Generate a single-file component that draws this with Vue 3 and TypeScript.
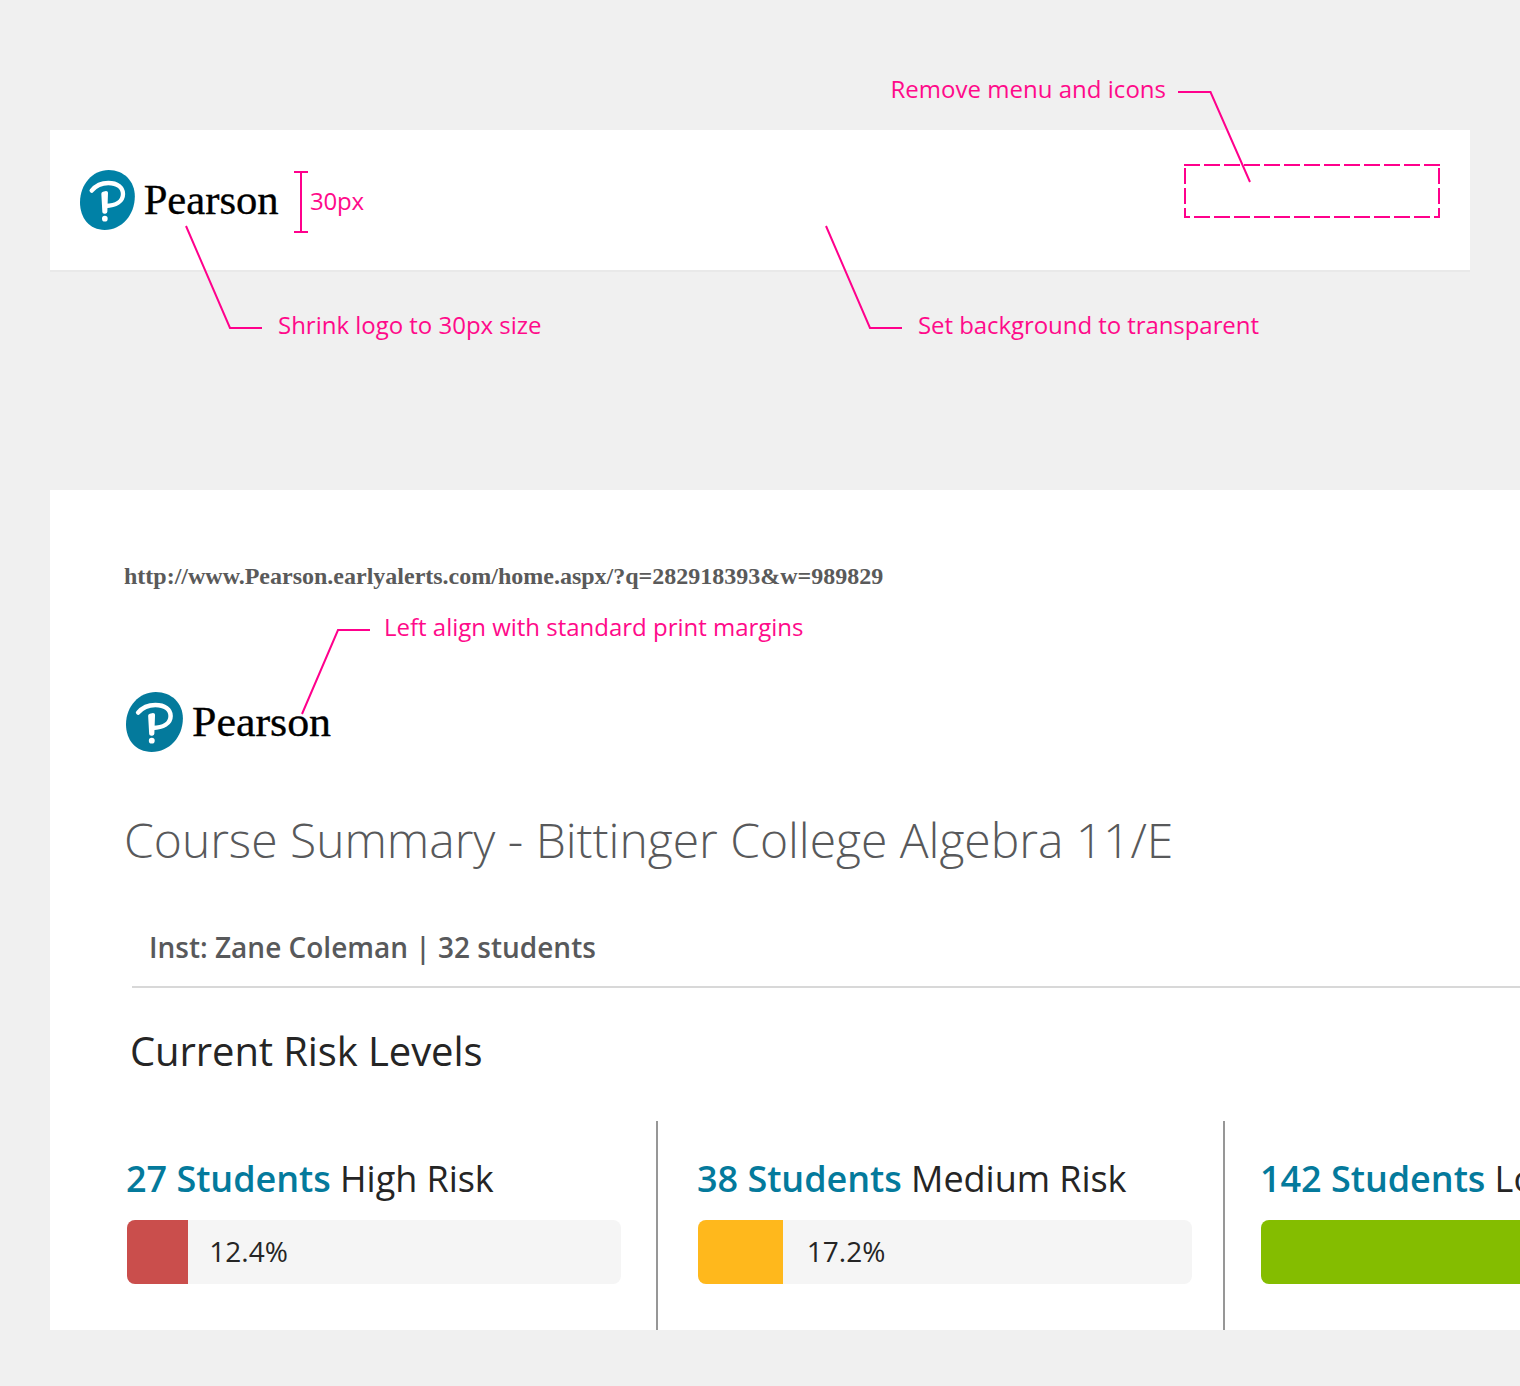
<script setup lang="ts">
interface Note {
  text: string
  x: number
  y: number
  width: number
  line: string
}

interface Risk {
  count: string
  level: string
  percent: string
  fill: number
  gap: number
  color: string
}

interface Logo {
  width: number
  color: string
}

const logos: Record<string, Logo> = {
  header: { width: 200, color: '#0081a6' },
  print: { width: 207.5, color: '#047a9c' },
}

const notes: Note[] = [
  { text: 'Remove menu and icons', x: 890.5, y: 98, width: 275.5, line: '1178,92 1210.5,92 1250,182' },
  { text: 'Shrink logo to 30px size', x: 278, y: 334, width: 263.5, line: '186,226 230,328 262,328' },
  { text: 'Set background to transparent', x: 918, y: 334, width: 341, line: '826,226 870,328 902,328' },
  { text: 'Left align with standard print margins', x: 384, y: 636, width: 419.5, line: '302,714 338,630 370,630' },
]

const risks: Risk[] = [
  { count: '27 Students', level: 'High Risk', percent: '12.4%', fill: 61.3, gap: 21, color: '#ca4e4c' },
  { count: '38 Students', level: 'Medium Risk', percent: '17.2%', fill: 85.3, gap: 23.5, color: '#ffb81c' },
  { count: '142 Students', level: 'Low Risk', percent: '', fill: 494, gap: 0, color: '#84bd00' },
]
</script>

<template>
  <div class="board">
    <header class="bar">
      <svg class="logo" :width="logos.header.width" height="60" viewBox="0 0 600 180" preserveAspectRatio="none">
        <path d="M86 0C132 0 164.500 34 164.500 79C164.500 135 126 180 74 180C28 180 0 144 0 97C0 43 38 0 86 0Z" :fill="logos.header.color" />
        <path d="M35 62C48 46 66 39 85 39C112 39 129 52 129 72C129 95 107 107 77 108" fill="none" stroke="#fff" stroke-width="13" stroke-linecap="round" />
        <path d="M64 71Q64 66 69 65L78 63Q84 63 84 68L82 125Q82 130 76 131Q67 132 67 126Z" fill="#fff" />
        <circle cx="74.500" cy="146" r="8.500" fill="#fff" />
        <text class="word" x="191" y="131" textLength="405" lengthAdjust="spacingAndGlyphs">Pearson</text>
      </svg>
    </header>

    <main class="sheet">
      <p class="url">http://www.Pearson.earlyalerts.com/home.aspx/?q=282918393&amp;w=989829</p>
      <svg class="logo" :width="logos.print.width" height="60" viewBox="0 0 600 180" preserveAspectRatio="none">
        <path d="M86 0C132 0 164.500 34 164.500 79C164.500 135 126 180 74 180C28 180 0 144 0 97C0 43 38 0 86 0Z" :fill="logos.print.color" />
        <path d="M35 62C48 46 66 39 85 39C112 39 129 52 129 72C129 95 107 107 77 108" fill="none" stroke="#fff" stroke-width="13" stroke-linecap="round" />
        <path d="M64 71Q64 66 69 65L78 63Q84 63 84 68L82 125Q82 130 76 131Q67 132 67 126Z" fill="#fff" />
        <circle cx="74.500" cy="146" r="8.500" fill="#fff" />
        <text class="word" x="191" y="131" textLength="402" lengthAdjust="spacingAndGlyphs">Pearson</text>
      </svg>
      <h1 class="title">Course Summary - Bittinger College Algebra 11/E</h1>
      <p class="inst">Inst: Zane Coleman | 32 students</p>
      <h2 class="section">Current Risk Levels</h2>
      <div class="risks">
        <section v-for="risk in risks" :key="risk.level" class="risk">
          <h3 class="label"><b>{{ risk.count }}</b> {{ risk.level }}</h3>
          <div class="track">
            <div class="fill" :style="{ width: risk.fill + 'px', background: risk.color }"></div>
            <span class="percent" :style="{ marginLeft: risk.gap + 'px' }">{{ risk.percent }}</span>
          </div>
        </section>
      </div>
    </main>

    <svg class="notes" width="1520" height="1386" viewBox="0 0 1520 1386">
      <g v-for="note in notes" :key="note.text">
        <polyline :points="note.line" />
        <text :x="note.x" :y="note.y" :textLength="note.width">{{ note.text }}</text>
      </g>
      <path d="M294 172H308M301 172V232M294 232H308" />
      <text x="310" y="210" textLength="54">30px</text>
      <path d="M1184 165H1440" stroke-dasharray="16 4" />
      <path d="M1185 168V218M1439 168V218" stroke-dasharray="16 4" />
      <path d="M1184 217H1440" stroke-dasharray="16 4" stroke-dashoffset="10" />
    </svg>
  </div>
</template>

<style>
body {
  margin: 0;
  overflow: hidden;
}
</style>

<style scoped>
.board {
  position: relative;
  box-sizing: border-box;
  width: 1520px;
  height: 1386px;
  padding: 130px 0 0 50px;
  overflow: hidden;
  background: #f0f0f0;
  font-family: "Open Sans", sans-serif;
}

.bar {
  box-sizing: border-box;
  width: 1420px;
  height: 142px;
  padding: 40px 30px 0;
  border-bottom: 2px solid #e9e9e9;
  background: #fff;
}

.logo {
  display: block;
  overflow: visible;
}

.word {
  font-family: "Liberation Serif", serif;
  font-size: 125px;
  fill: #000;
  stroke: #000;
  stroke-width: 1px;
}

.sheet {
  box-sizing: border-box;
  height: 840px;
  margin-top: 218px;
  padding-top: 70px;
  overflow: hidden;
  background: #fff;
}

.url {
  margin: 0 0 0 74px;
  font: bold 24px/32px "Liberation Serif", serif;
  color: #5a5a5a;
  white-space: nowrap;
}

.sheet .logo {
  margin: 100px 0 0 76px;
}

.title {
  margin: 55px 0 0 74px;
  font-size: 48px;
  font-weight: 300;
  line-height: 66px;
  letter-spacing: -0.02px;
  color: #58595b;
  white-space: nowrap;
}

.inst {
  box-sizing: border-box;
  height: 61px;
  margin: 54px 0 0 82px;
  padding-left: 17px;
  border-bottom: 2px solid #d8d8d8;
  font-size: 28px;
  font-weight: 600;
  line-height: 40px;
  color: #58595b;
}

.section {
  margin: 35px 0 0 80px;
  font-size: 40px;
  font-weight: 400;
  line-height: 56px;
  letter-spacing: -0.1px;
  color: #252525;
}

.risks {
  display: flex;
  margin-top: 42px;
  height: 209px;
}

.risk {
  flex: none;
  box-sizing: border-box;
  width: 608px;
  padding: 33px 35px 0 77px;
  border-right: 2px solid #979797;
}

.risk + .risk {
  width: 567px;
  padding: 33px 31px 0 40px;
}

.risk:last-child {
  padding-left: 36px;
}

.label {
  margin: 0 0 0 -1px;
  font-size: 36px;
  font-weight: 400;
  line-height: 50px;
  letter-spacing: -0.04px;
  color: #252525;
  white-space: nowrap;
}

.label b {
  font-weight: 600;
  color: #047a9c;
}

.track {
  display: flex;
  align-items: center;
  width: 494px;
  height: 64px;
  margin-top: 16px;
  border-radius: 8px;
  overflow: hidden;
  background: #f5f5f5;
}

.fill {
  flex: none;
  height: 64px;
}

.percent {
  padding-bottom: 2px;
  font-size: 28px;
  color: #252525;
}

.notes {
  position: absolute;
  inset: 0;
  pointer-events: none;
}

.notes path,
.notes polyline {
  fill: none;
  stroke: #ff008c;
  stroke-width: 2;
}

.notes text {
  font-size: 24px;
  fill: #ff0a8a;
}
</style>
